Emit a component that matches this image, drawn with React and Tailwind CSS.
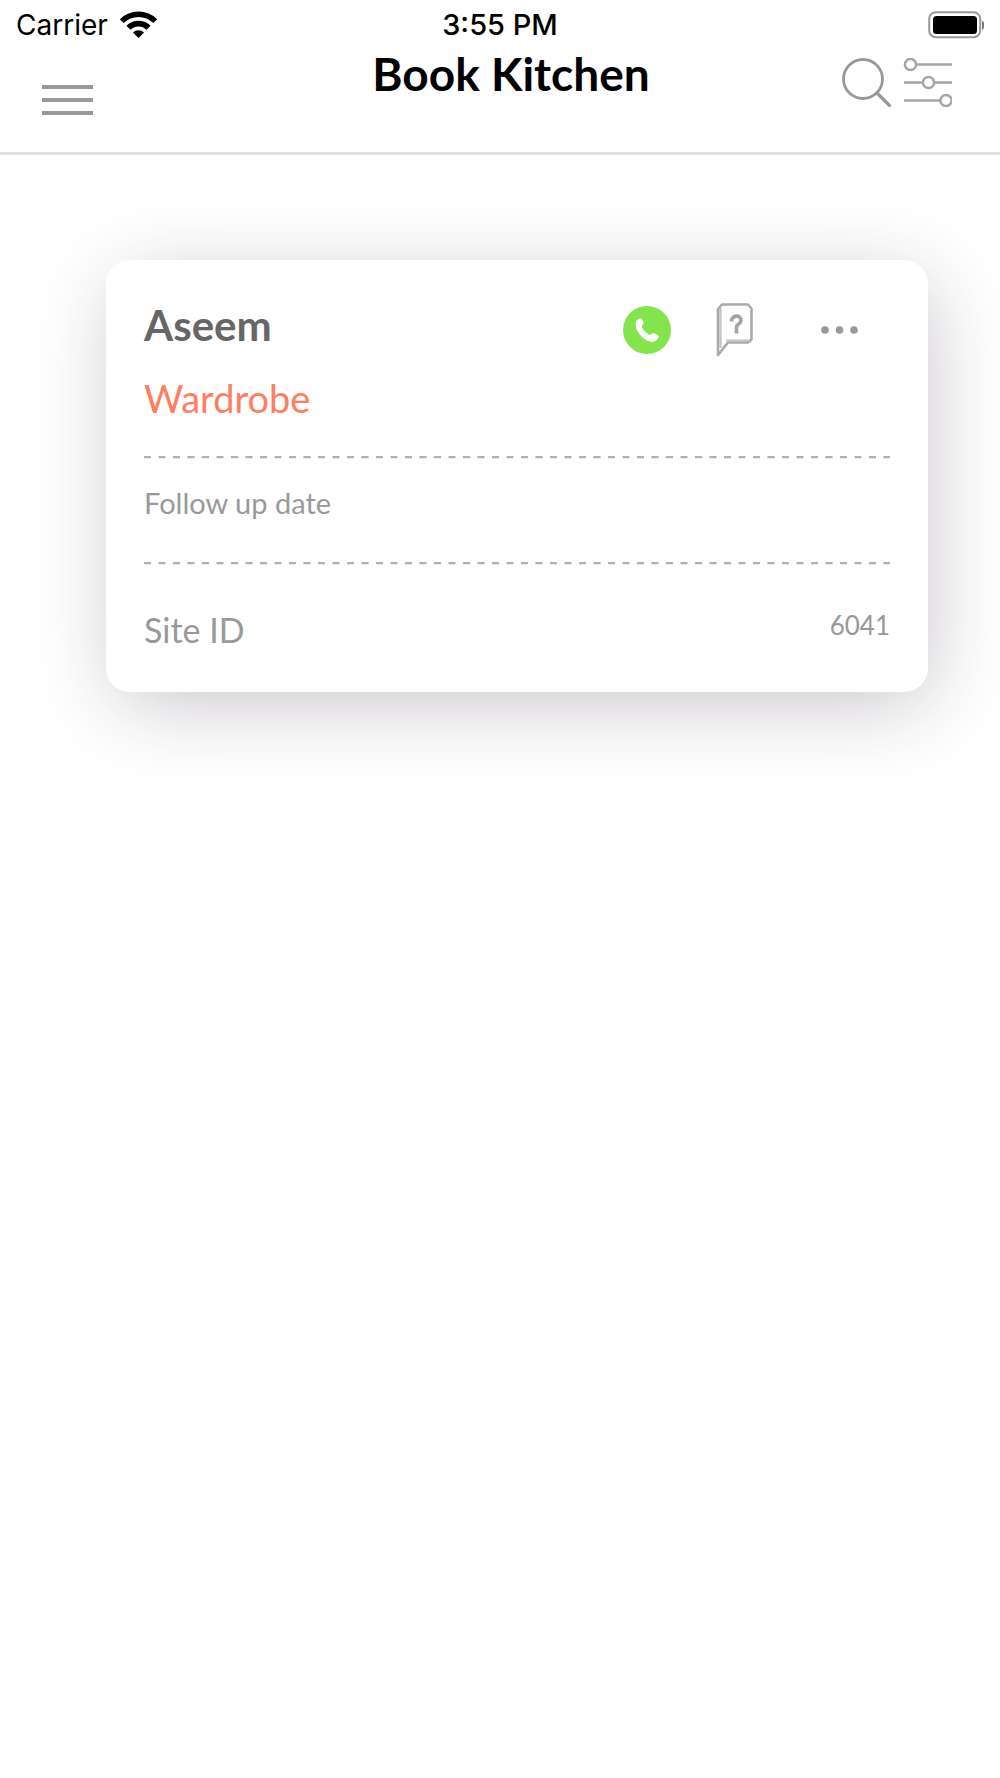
const LEADS = [
  { id: 6041, name: 'Aseem', category: 'Wardrobe' },
]

function StatusBar() {
  return (
    <div className="grid grid-cols-[1fr_auto_1fr] items-center h-[50px] pl-4 pr-4 leading-[34px] text-black font-['Inter',sans-serif]">
      <div className="flex items-center gap-3">
        <span className="text-[28px]">Carrier</span>
        {/* Wifi */}
        <svg className="w-[37px] h-7" viewBox="0 0 37 28" fill="none" stroke="#000">
          <path strokeWidth="5.4" d="M1.8 10.2a23.6 23.6 0 0 1 33.4 0" />
          <path strokeWidth="5.6" d="M8.4 16.8a14.3 14.3 0 0 1 20.2 0" />
          <path fill="#000" stroke="none" d="M18.5 27l-5.6-5.4a8 8 0 0 1 11.2 0z" />
        </svg>
      </div>
      <span className="text-[29px] font-medium">3:55 PM</span>
      <div className="flex justify-end">
        {/* Battery */}
        <svg className="w-14 h-7" viewBox="0 0 56 28">
          <rect x="1.2" y="1.2" width="51" height="25" rx="6.5" fill="none" stroke="#999" strokeWidth="2" />
          <rect x="5" y="5" width="44" height="18" rx="3.5" fill="#000" />
          <path d="M54 9.5c3 1.4 3 8 0 9.4z" fill="#777" />
        </svg>
      </div>
    </div>
  )
}

function Header() {
  return (
    <header className="border-b-3 border-[#e0e0e0]">
      <StatusBar />
      <div className="grid grid-cols-[1fr_auto_1fr] items-start h-[102px] pl-[42px] pr-12">
        <button aria-label="Menu" className="mt-[35px] w-[51px] flex flex-col gap-[9px]">
          <span className="h-1 w-full bg-[#999]" />
          <span className="h-1 w-full bg-[#999]" />
          <span className="h-1 w-full bg-[#999]" />
        </button>
        <h1 className="pl-7 text-[46px] leading-[48px] font-bold text-black">Book Kitchen</h1>
        <div className="flex justify-end gap-3 pt-2">
          <button aria-label="Search">
            <svg className="w-[49px] h-[49px]" viewBox="0 0 49 49" fill="none" stroke="#999">
              <circle cx="21" cy="21" r="19.5" strokeWidth="2.8" />
              <path d="M35 35l12.5 12.5" strokeWidth="3.2" strokeLinecap="round" />
            </svg>
          </button>
          <button aria-label="Filters">
            <svg className="w-[49px] h-[49px]" viewBox="0 0 49 49" fill="none" stroke="#a6a6a6" strokeWidth="2.5">
              <circle cx="7.5" cy="6.5" r="5.6" />
              <path d="M13.5 6.5H49M1 24.5h18.5M31.5 24.5H49M1 42.5h36.5" />
              <circle cx="25.5" cy="24.5" r="5.6" />
              <circle cx="43" cy="42.5" r="5.6" />
            </svg>
          </button>
        </div>
      </div>
    </header>
  )
}

function DashedLine() {
  return (
    <svg className="block w-full h-[3px]" aria-hidden="true">
      <line x1="0" y1="1" x2="100%" y2="1" stroke="#b0b0b0" strokeWidth="2.4" strokeDasharray="7 7.5" />
    </svg>
  )
}

function LeadCard({ lead }) {
  return (
    <article className="bg-white rounded-3xl px-[38px] py-10 shadow-[6px_16px_84px_-8px_rgba(45,30,50,0.28)]">
      <div className="flex items-start justify-between pr-8">
        <h2 className="text-[42px] leading-[50px] font-bold text-[#666]">{lead.name}</h2>
        <div className="flex items-center h-[60px]">
          <button aria-label="Call">
            <svg className="w-12 h-12" viewBox="0 0 48 48">
              <circle cx="24" cy="24" r="24" fill="#84e44e" />
              <path
                d="M13 15.5c1-2 3.5-3.5 5-3 1.2.8 2.4 3.2 2.6 5-.2 1.2-1.8 2-1.8 3.2 1 3 4.8 7 7.8 8 1.4.3 2.4-1.5 3.6-1.4 1.8.2 4.6 1.7 5.6 3-.2 2.2-2.4 4.4-5 5.4-8.6 1-20-10.2-17.8-20.2z"
                fill="#fff"
              />
            </svg>
          </button>
          <button aria-label="Queries" className="ml-[45px]">
            <svg className="w-[37px] h-[54px]" viewBox="0 0 37 54" fill="none">
              <path d="M6 1.5h26l3.5 4v31l-3.5 3H12L2 52V6z" stroke="#aaa" strokeWidth="2.6" strokeLinejoin="round" />
              <path d="M4.5 5v40" stroke="#c4c4c4" strokeWidth="2.4" />
              <path d="M10 37.5h24" stroke="#c4c4c4" strokeWidth="2" />
              <path d="M15.5 18.5c0-7 9.5-7 9.5-1 0 3.5-4.5 3-4.5 7v6" stroke="#a4a4a4" strokeWidth="3.6" />
            </svg>
          </button>
          <button aria-label="More" className="ml-[68px]">
            <svg className="w-[37px] h-2" viewBox="0 0 37 8" fill="#999">
              <circle cx="4" cy="4" r="3.8" />
              <circle cx="18.5" cy="4" r="3.8" />
              <circle cx="33" cy="4" r="3.8" />
            </svg>
          </button>
        </div>
      </div>
      <p className="mt-4 text-[38px] leading-[44px] text-[#ff7e61]">{lead.category}</p>
      <div className="mt-9">
        <DashedLine />
      </div>
      <p className="pt-6 pb-10 text-[29px] leading-[39px] text-[#999]">Follow up date</p>
      <DashedLine />
      <div className="flex items-start justify-between mt-[43px] text-[#999]">
        <span className="text-[34px] leading-[44px]">Site ID</span>
        <span className="text-[26px] leading-[34px]">{lead.id}</span>
      </div>
    </article>
  )
}

export default function App() {
  return (
    <div className="min-h-screen bg-white font-['Lato',sans-serif]">
      <Header />
      <main className="flex flex-col gap-10 pl-[106px] pr-[72px] pt-[105px] pb-24">
        {LEADS.map((lead) => (
          <LeadCard key={lead.id} lead={lead} />
        ))}
      </main>
    </div>
  )
}
